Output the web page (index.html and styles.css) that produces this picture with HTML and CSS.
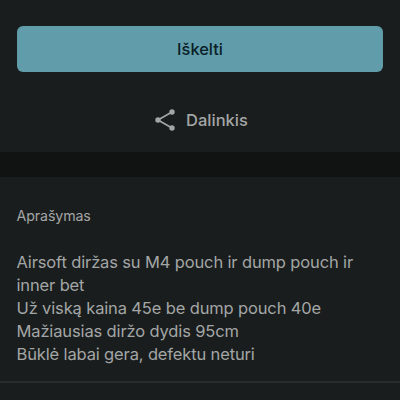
FILE: index.html
```
<!DOCTYPE html>
<html lang="lt">
<head>
<meta charset="utf-8">
<title>Skelbimas</title>
<link rel="stylesheet" href="styles.css">
</head>
<body>
<section class="actions">
<button class="primary">Iškelti</button>
<a class="share">
<svg class="share-icon" viewBox="0 0 20 22" width="20" height="22"><path d="M17 3 3 11l14 8" fill="none" stroke="currentColor" stroke-width="1.700"/><circle cx="17" cy="3" r="2.700"/><circle cx="3" cy="11" r="2.700"/><circle cx="17" cy="19" r="2.700"/></svg>
<span>Dalinkis</span>
</a>
</section>
<section class="description">
<h2>Aprašymas</h2>
<p>Airsoft diržas su M4 pouch ir dump pouch ir inner bet<br>Už viską kaina 45e be dump pouch 40e<br>Mažiausias diržo dydis 95cm<br>Būklė labai gera, defektu neturi</p>
</section>
</body>
</html>
```
FILE: styles.css
```
* { box-sizing: border-box; }
body {
  margin: 0;
  height: 400px;
  overflow: hidden;
  background: #1a1d1d;
  color: #a3a6a6;
  font-family: Inter, sans-serif;
}
.actions {
  height: 152px;
  padding: 26px 17px 0;
  display: flex;
  flex-direction: column;
  align-items: center;
}
.primary {
  width: 100%;
  height: 46px;
  border: 0;
  border-radius: 6px;
  background: #609caa;
  color: #0b2027;
  font: 500 16.4px Inter, sans-serif;
}
.share {
  margin-top: 37px;
  padding-left: 3px;
  display: flex;
  align-items: center;
  gap: 11px;
  font-size: 16.5px;
  line-height: 22px;
  font-weight: 500;
}
.share-icon { fill: currentColor; }
.description {
  height: 231px;
  border-top: 25px solid #111312;
  border-bottom: 2px solid #282c2c;
  padding: 30px 16.5px 0;
}
h2 {
  margin: 0;
  font-size: 14.2px;
  line-height: 18px;
  font-weight: 400;
  letter-spacing: -0.1px;
}
p {
  margin: 25.5px 0 0;
  font-size: 16.5px;
  line-height: 23px;
  letter-spacing: -0.14px;
}
```
